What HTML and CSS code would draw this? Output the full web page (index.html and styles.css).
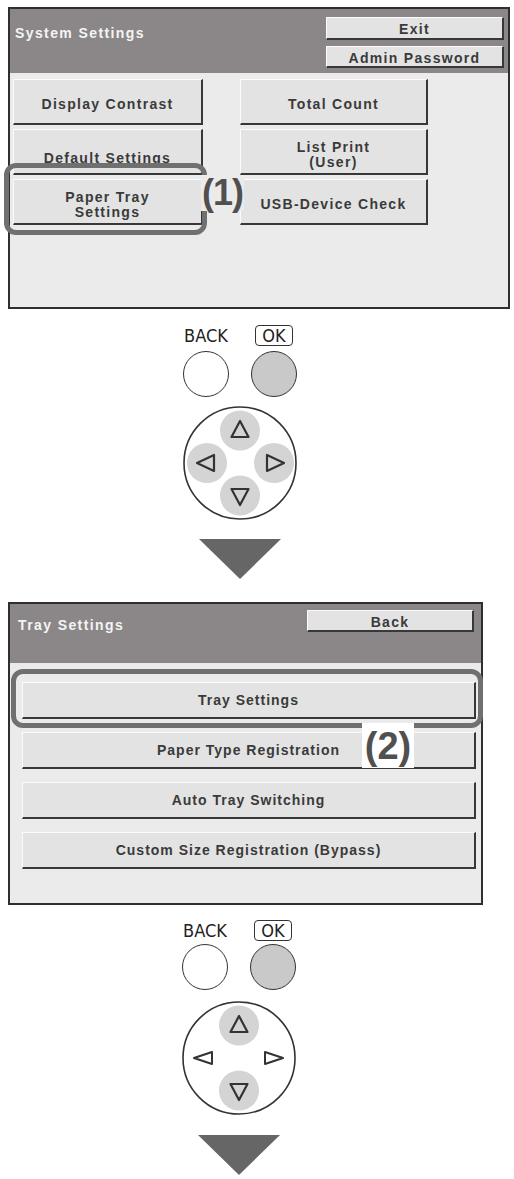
FILE: index.html
```html
<!DOCTYPE html>
<html>
<head>
<meta charset="utf-8">
<link rel="stylesheet" href="styles.css">
</head>
<body>
<div class="page">
  <section class="panel panel-sys">
    <div class="hdr">
      <div class="title">System Settings</div>
      <div class="hdr-btns">
        <div class="btn hbtn">Exit</div>
        <div class="btn hbtn hbtn2">Admin Password</div>
      </div>
    </div>
    <div class="grid">
      <div class="btn">Display Contrast</div>
      <div class="btn">Total Count</div>
      <div class="btn btn-under">Default Settings</div>
      <div class="btn">List Print<br>(User)</div>
      <div class="btn">Paper Tray<br>Settings</div>
      <div class="btn">USB-Device Check</div>
    </div>
    <div class="hl hl1"></div>
    <div class="callout c1">(1)</div>
  </section>

  <div class="controls">
    <div class="labels">
      <div class="lbl"><span class="back-lbl">BACK</span></div>
      <div class="lbl"><span class="ok-lbl">OK</span></div>
    </div>
    <div class="circles">
      <div class="circ"></div>
      <div class="circ ok"></div>
    </div>
    <svg class="dpad" viewBox="0 0 114 114" width="114" height="114">
      <circle cx="57" cy="57" r="56" fill="#fff" stroke="#333" stroke-width="1.6"/>
      <circle cx="57" cy="24.5" r="20" fill="#d4d4d4"/>
      <circle cx="24" cy="57" r="20" fill="#d4d4d4"/>
      <circle cx="91" cy="57" r="20" fill="#d4d4d4"/>
      <circle cx="57" cy="89.5" r="20" fill="#d4d4d4"/>
      <polygon points="57,15 48.5,31 65.5,31" fill="none" stroke="#333" stroke-width="2.2" stroke-linejoin="round"/>
      <polygon points="14,57 31,49 31,65" fill="none" stroke="#333" stroke-width="2.2" stroke-linejoin="round"/>
      <polygon points="101,57 84,49 84,65" fill="none" stroke="#333" stroke-width="2.2" stroke-linejoin="round"/>
      <polygon points="57,99 48.5,83 65.5,83" fill="none" stroke="#333" stroke-width="2.2" stroke-linejoin="round"/>
    </svg>
    <svg class="arrow" width="82" height="40" viewBox="0 0 82 40">
      <polygon points="0,0 82,0 41,40" fill="#666"/>
    </svg>
  </div>

  <section class="panel panel-tray">
    <div class="hdr">
      <div class="title">Tray Settings</div>
      <div class="hdr-btns narrow">
        <div class="btn hbtn hbtn2">Back</div>
      </div>
    </div>
    <div class="list">
      <div class="btn">Tray Settings</div>
      <div class="btn">Paper Type Registration</div>
      <div class="btn">Auto Tray Switching</div>
      <div class="btn">Custom Size Registration (Bypass)</div>
    </div>
    <div class="hl hl2"></div>
    <div class="callout c2">(2)</div>
  </section>

  <div class="controls controls2">
    <div class="labels">
      <div class="lbl"><span class="back-lbl">BACK</span></div>
      <div class="lbl"><span class="ok-lbl">OK</span></div>
    </div>
    <div class="circles">
      <div class="circ"></div>
      <div class="circ ok"></div>
    </div>
    <svg class="dpad" viewBox="0 0 114 114" width="114" height="114">
      <circle cx="57" cy="57" r="56" fill="#fff" stroke="#333" stroke-width="1.6"/>
      <circle cx="57" cy="24.5" r="20" fill="#d4d4d4"/>
      <circle cx="57" cy="89.5" r="20" fill="#d4d4d4"/>
      <polygon points="57,15 48.5,31 65.5,31" fill="none" stroke="#333" stroke-width="2.2" stroke-linejoin="round"/>
      <polygon points="12,57 30,51 30,63" fill="none" stroke="#333" stroke-width="2" stroke-linejoin="round"/>
      <polygon points="101,57 83,51 83,63" fill="none" stroke="#333" stroke-width="2" stroke-linejoin="round"/>
      <polygon points="57,99 48.5,83 65.5,83" fill="none" stroke="#333" stroke-width="2.2" stroke-linejoin="round"/>
    </svg>
    <svg class="arrow" width="82" height="40" viewBox="0 0 82 40">
      <polygon points="0,0 82,0 41,40" fill="#666"/>
    </svg>
  </div>
</div>
</body>
</html>
```

FILE: styles.css
```css
* { box-sizing: border-box; }

body {
  margin: 0;
  background: #fff;
  font-family: "Liberation Sans", Arial, sans-serif;
}

.page {
  padding-top: 7px;
}

.panel {
  position: relative;
  margin-left: 8px;
  border: 2px solid #2f2f2f;
  background: #ebebeb;
  display: flex;
  flex-direction: column;
}

.panel-sys { width: 502px; height: 302px; }
.panel-tray { width: 475px; height: 303px; margin-top: 23px; }

.hdr {
  background: #8b8788;
  display: flex;
  justify-content: space-between;
  align-items: flex-start;
}

.panel-sys .hdr { height: 64px; padding: 8px 4px 0 5px; }
.panel-tray .hdr { height: 59px; padding: 6px 7px 0 8px; }

.title {
  color: #f4f4f4;
  font-weight: bold;
  font-size: 14px;
  line-height: 16px;
  letter-spacing: 1.4px;
}
.panel-sys .title { margin-top: 8px; }
.panel-tray .title { margin-top: 7px; }

.hdr-btns {
  display: flex;
  flex-direction: column;
  gap: 6px;
  width: 178px;
}
.hdr-btns.narrow { width: 167px; }

.btn {
  background: #e3e3e3;
  border-top: 1px solid #fbfbfb;
  border-left: 1px solid #fbfbfb;
  border-right: 2px solid #383838;
  border-bottom: 2px solid #383838;
  color: #3a3a3a;
  font-weight: bold;
  font-size: 14px;
  letter-spacing: 1.3px;
  display: flex;
  align-items: center;
  justify-content: center;
  text-align: center;
}

.hbtn { height: 23px; padding-top: 2px; }
.hbtn2 { height: 22px; }

.grid {
  display: grid;
  grid-template-columns: 190px 188px;
  grid-auto-rows: 46px;
  column-gap: 37px;
  row-gap: 4px;
  padding: 6px 0 0 3px;
}
.grid .btn { padding-top: 6px; line-height: 15px; }
.grid .btn.btn-under { padding-top: 14px; }

.list {
  display: flex;
  flex-direction: column;
  gap: 13px;
  padding: 19px 5px 0 12px;
}
.list .btn { height: 37px; letter-spacing: 1px; }

.hl {
  position: absolute;
  border: 5px solid #707070;
  border-radius: 12px;
}
.hl1 { left: -6px; top: 154px; width: 203px; height: 72px; }
.hl2 { left: 1px; top: 65px; width: 472px; height: 59px; }

.callout {
  position: absolute;
  font-weight: bold;
  color: #505050;
  line-height: 1;
}
.c1 {
  left: 191px;
  top: 166px;
  font-size: 36px;
  letter-spacing: -1px;
  background: #ebebeb;
  padding: 0 1px;
}
.c2 {
  left: 352px;
  top: 119px;
  width: 52px;
  height: 45px;
  background: #fff;
  font-size: 38px;
  display: flex;
  align-items: center;
  justify-content: center;
}

.controls {
  width: 114px;
  margin-left: 183px;
  margin-top: 16px;
}
.controls2 { margin-left: 182px; margin-top: 15px; }

.labels {
  display: flex;
  justify-content: space-between;
  align-items: flex-end;
  height: 21px;
}
.lbl {
  width: 46px;
  display: flex;
  justify-content: center;
  align-items: flex-end;
}
.back-lbl, .ok-lbl {
  font-family: "Liberation Sans Narrow", "DejaVu Sans Condensed", "Liberation Sans", sans-serif;
  font-size: 18px;
  line-height: 18px;
  color: #222;
}
.back-lbl { margin-bottom: 1px; }
.ok-lbl {
  width: 38px;
  height: 21px;
  border: 1.5px solid #333;
  border-radius: 4px;
  display: flex;
  align-items: center;
  justify-content: center;
}

.circles {
  display: flex;
  justify-content: space-between;
  margin-top: 5px;
}
.controls2 .circles { margin-top: 3px; }

.circ {
  width: 46px;
  height: 46px;
  border-radius: 50%;
  border: 1.6px solid #333;
  background: #fff;
}
.circ.ok { background: #c9c9c9; }

.dpad { display: block; margin-top: 9px; }
.controls2 .dpad { margin-top: 11px; }

.arrow { display: block; margin: 19px 0 0 16px; }
.controls2 .arrow { margin-top: 20px; }
```
